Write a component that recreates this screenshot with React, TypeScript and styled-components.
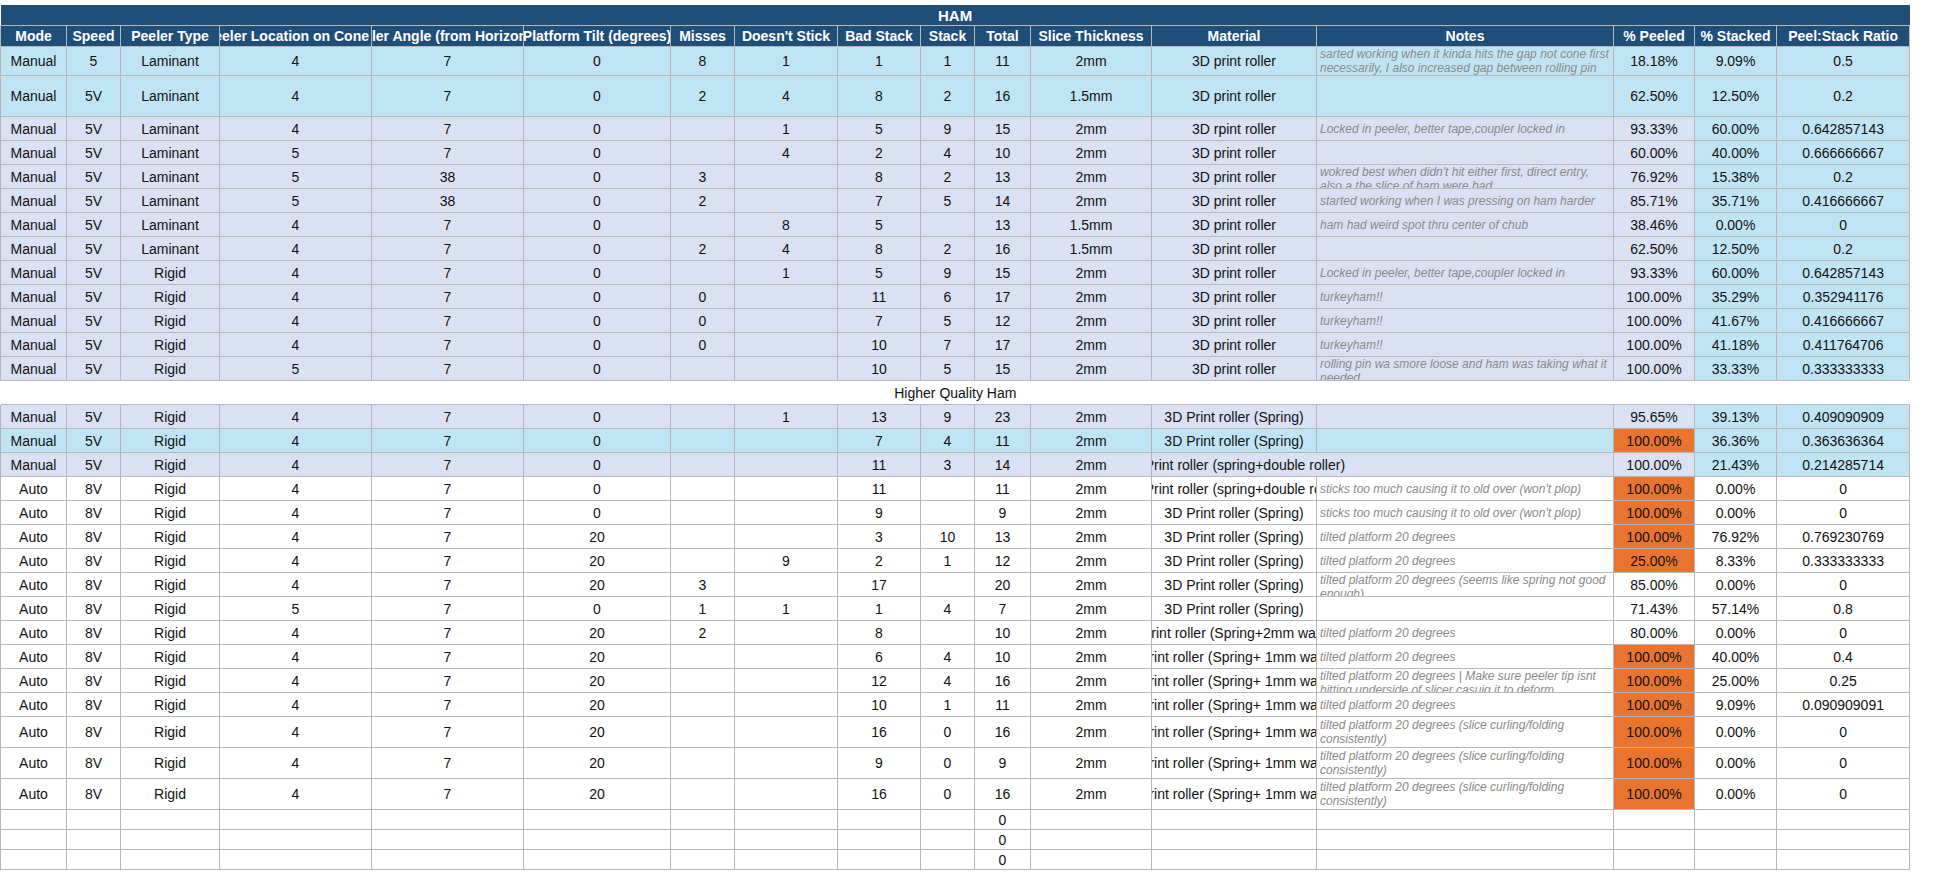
import React from "react";
import styled, { createGlobalStyle, css } from "styled-components";

const Global = createGlobalStyle`
  html, body { margin: 0; padding: 0; background: #fff; }
  body { font-family: "Liberation Sans", Arial, sans-serif; }
`;

const COLS = [66, 54, 99, 152, 152, 147, 64, 103, 83, 54, 56, 121, 165, 297, 81, 82, 133];
const NOTES_W = 297;

const Page = styled.div`
  padding-top: 5px;
`;

const Table = styled.table`
  border-collapse: collapse;
  table-layout: fixed;
  width: ${COLS.reduce((a, b) => a + b, 0)}px;
  font-size: 14px;
  color: #111;
`;

const TitleCell = styled.th`
  background: #1f4e79;
  color: #fff;
  font-weight: bold;
  font-size: 15px;
  height: 20px;
  padding: 0;
  text-align: center;
  border-bottom: 1px solid #b7b7b7;
`;

const HeadCell = styled.th`
  background: #1f4e79;
  color: #fff;
  font-weight: bold;
  font-size: 14px;
  height: 20px;
  padding: 0;
  border: 1px solid #b7b7b7;
  border-top: none;
`;

type Tone = "cyan" | "lav" | "white" | "orange";
const toneColor: Record<Tone, string> = {
  cyan: "#bfe5f4",
  lav: "#d9e1f2",
  white: "#ffffff",
  orange: "#e9742f",
};

const Td = styled.td<{ $tone: Tone }>`
  background: ${(p) => toneColor[p.$tone]};
  border: 1px solid #b7b7b7;
  padding: 0;
  vertical-align: middle;
`;

const Clip = styled.div<{ $h: number; $extra?: number }>`
  height: ${(p) => p.$h}px;
  display: flex;
  align-items: center;
  justify-content: center;
  overflow: hidden;
  white-space: nowrap;
  ${(p) =>
    p.$extra
      ? css`
          padding-right: ${p.$extra}px;
        `
      : ""}
`;

const Note = styled.div<{ $h: number }>`
  height: ${(p) => p.$h}px;
  display: flex;
  align-items: safe center;
  overflow: hidden;
  padding: 0 3px;
  font-style: italic;
  font-size: 12px;
  line-height: 14px;
  color: #8a8a8a;
`;

const SectionCell = styled.td`
  height: 23px;
  padding: 0;
  text-align: center;
  font-size: 14px;
  background: #fff;
  border-left: 1px solid #fff;
`;

const HEADERS = [
  "Mode", "Speed", "Peeler Type", "Peeler Location on Cone (o", "Peeler Angle (from Horizontal)",
  "Platform Tilt (degrees)", "Misses", "Doesn't Stick", "Bad Stack", "Stack", "Total",
  "Slice Thickness", "Material", "Notes", "% Peeled", "% Stacked", "Peel:Stack Ratio",
];

type R = {
  c: (string | number)[];
  tone: Tone;
  h?: number;
  orange?: boolean;
  spill?: boolean;
};

const N1 = "sarted working when it kinda hits the gap not cone first necessarily, I also increased gap between rolling pin and cone";
const LOCK = "Locked in peeler, better tape,coupler locked in";
const TILT = "tilted platform 20 degrees";
const CURL = "tilted platform 20 degrees (slice curling/folding consistently)";
const STICK = "sticks too much causing it to old over (won't plop)";
const SP = "3D Print roller (Spring)";
const DBL = "3D Print roller (spring+double roller)";
const W1 = "3D Print roller (Spring+ 1mm washer)";

const m = (a: (string | number)[], tone: Tone, extra: Partial<R> = {}): R => ({ c: a, tone, ...extra });

const sec1: R[] = [
  m(["Manual", 5, "Laminant", 4, 7, 0, 8, 1, 1, 1, 11, "2mm", "3D print roller", N1, "18.18%", "9.09%", 0.5], "cyan", { h: 28 }),
  m(["Manual", "5V", "Laminant", 4, 7, 0, 2, 4, 8, 2, 16, "1.5mm", "3D print roller", "", "62.50%", "12.50%", 0.2], "cyan", { h: 40 }),
  m(["Manual", "5V", "Laminant", 4, 7, 0, "", 1, 5, 9, 15, "2mm", "3D rpint roller", LOCK, "93.33%", "60.00%", "0.642857143"], "lav"),
  m(["Manual", "5V", "Laminant", 5, 7, 0, "", 4, 2, 4, 10, "2mm", "3D print roller", "", "60.00%", "40.00%", "0.666666667"], "lav"),
  m(["Manual", "5V", "Laminant", 5, 38, 0, 3, "", 8, 2, 13, "2mm", "3D print roller", "wokred best when didn't hit either first, direct entry, also a the slice of ham were bad", "76.92%", "15.38%", 0.2], "lav"),
  m(["Manual", "5V", "Laminant", 5, 38, 0, 2, "", 7, 5, 14, "2mm", "3D print roller", "started working when I was pressing on ham harder", "85.71%", "35.71%", "0.416666667"], "lav"),
  m(["Manual", "5V", "Laminant", 4, 7, 0, "", 8, 5, "", 13, "1.5mm", "3D print roller", "ham had weird spot thru center of chub", "38.46%", "0.00%", 0], "lav"),
  m(["Manual", "5V", "Laminant", 4, 7, 0, 2, 4, 8, 2, 16, "1.5mm", "3D print roller", "", "62.50%", "12.50%", 0.2], "lav"),
  m(["Manual", "5V", "Rigid", 4, 7, 0, "", 1, 5, 9, 15, "2mm", "3D print roller", LOCK, "93.33%", "60.00%", "0.642857143"], "lav"),
  m(["Manual", "5V", "Rigid", 4, 7, 0, 0, "", 11, 6, 17, "2mm", "3D print roller", "turkeyham!!", "100.00%", "35.29%", "0.352941176"], "lav"),
  m(["Manual", "5V", "Rigid", 4, 7, 0, 0, "", 7, 5, 12, "2mm", "3D print roller", "turkeyham!!", "100.00%", "41.67%", "0.416666667"], "lav"),
  m(["Manual", "5V", "Rigid", 4, 7, 0, 0, "", 10, 7, 17, "2mm", "3D print roller", "turkeyham!!", "100.00%", "41.18%", "0.411764706"], "lav"),
  m(["Manual", "5V", "Rigid", 5, 7, 0, "", "", 10, 5, 15, "2mm", "3D print roller", "rolling pin wa smore loose and ham was taking what it needed", "100.00%", "33.33%", "0.333333333"], "lav"),
];

const sec2: R[] = [
  m(["Manual", "5V", "Rigid", 4, 7, 0, "", 1, 13, 9, 23, "2mm", SP, "", "95.65%", "39.13%", "0.409090909"], "lav"),
  m(["Manual", "5V", "Rigid", 4, 7, 0, "", "", 7, 4, 11, "2mm", SP, "", "100.00%", "36.36%", "0.363636364"], "cyan", { orange: true }),
  m(["Manual", "5V", "Rigid", 4, 7, 0, "", "", 11, 3, 14, "2mm", DBL, "", "100.00%", "21.43%", "0.214285714"], "lav", { spill: true }),
  m(["Auto", "8V", "Rigid", 4, 7, 0, "", "", 11, "", 11, "2mm", DBL, STICK, "100.00%", "0.00%", 0], "white", { orange: true }),
  m(["Auto", "8V", "Rigid", 4, 7, 0, "", "", 9, "", 9, "2mm", SP, STICK, "100.00%", "0.00%", 0], "white", { orange: true }),
  m(["Auto", "8V", "Rigid", 4, 7, 20, "", "", 3, 10, 13, "2mm", SP, TILT, "100.00%", "76.92%", "0.769230769"], "white", { orange: true }),
  m(["Auto", "8V", "Rigid", 4, 7, 20, "", 9, 2, 1, 12, "2mm", SP, TILT, "25.00%", "8.33%", "0.333333333"], "white", { orange: true }),
  m(["Auto", "8V", "Rigid", 4, 7, 20, 3, "", 17, "", 20, "2mm", SP, "tilted platform 20 degrees (seems like spring not good enough)", "85.00%", "0.00%", 0], "white"),
  m(["Auto", "8V", "Rigid", 5, 7, 0, 1, 1, 1, 4, 7, "2mm", SP, "", "71.43%", "57.14%", 0.8], "white"),
  m(["Auto", "8V", "Rigid", 4, 7, 20, 2, "", 8, "", 10, "2mm", "3D Print roller (Spring+2mm washer)", TILT, "80.00%", "0.00%", 0], "white"),
  m(["Auto", "8V", "Rigid", 4, 7, 20, "", "", 6, 4, 10, "2mm", W1, TILT, "100.00%", "40.00%", 0.4], "white", { orange: true }),
  m(["Auto", "8V", "Rigid", 4, 7, 20, "", "", 12, 4, 16, "2mm", W1, "tilted platform 20 degrees | Make sure peeler tip isnt hitting underside of slicer casuig it to deform", "100.00%", "25.00%", 0.25], "white", { orange: true }),
  m(["Auto", "8V", "Rigid", 4, 7, 20, "", "", 10, 1, 11, "2mm", W1, TILT, "100.00%", "9.09%", "0.090909091"], "white", { orange: true }),
  m(["Auto", "8V", "Rigid", 4, 7, 20, "", "", 16, 0, 16, "2mm", W1, CURL, "100.00%", "0.00%", 0], "white", { orange: true, h: 30 }),
  m(["Auto", "8V", "Rigid", 4, 7, 20, "", "", 9, 0, 9, "2mm", W1, CURL, "100.00%", "0.00%", 0], "white", { orange: true, h: 30 }),
  m(["Auto", "8V", "Rigid", 4, 7, 20, "", "", 16, 0, 16, "2mm", W1, CURL, "100.00%", "0.00%", 0], "white", { orange: true, h: 30 }),
  ...[0, 1, 2].map(() => m(["", "", "", "", "", "", "", "", "", "", 0, "", "", "", "", "", ""], "white", { h: 19 })),
];

function DataRow({ r }: { r: R }) {
  const h = r.h ?? 23;
  const cells: React.ReactNode[] = [];
  r.c.forEach((v, i) => {
    if (r.spill && i === 13) return;
    let tone: Tone = r.tone;
    if ((i === 15 || i === 16) && r.tone !== "white") tone = "cyan";
    if (i === 14 && r.orange) tone = "orange";
    if (i === 13) {
      cells.push(
        <Td key={i} $tone={tone}>
          <Note $h={h}>{v}</Note>
        </Td>
      );
    } else if (i === 12 && r.spill) {
      cells.push(
        <Td key={i} $tone={tone} colSpan={2}>
          <Clip $h={h} $extra={NOTES_W}>{v}</Clip>
        </Td>
      );
    } else {
      cells.push(
        <Td key={i} $tone={tone}>
          <Clip $h={h}>{v}</Clip>
        </Td>
      );
    }
  });
  return <tr>{cells}</tr>;
}

export default function App() {
  return (
    <Page>
      <Global />
      <Table>
        <colgroup>
          {COLS.map((w, i) => (
            <col key={i} style={{ width: w }} />
          ))}
        </colgroup>
        <thead>
          <tr>
            <TitleCell colSpan={17}>HAM</TitleCell>
          </tr>
          <tr>
            {HEADERS.map((t, i) => (
              <HeadCell key={i}>
                <Clip $h={20}>{t}</Clip>
              </HeadCell>
            ))}
          </tr>
        </thead>
        <tbody>
          {sec1.map((r, i) => (
            <DataRow key={"a" + i} r={r} />
          ))}
          <tr>
            <SectionCell colSpan={17}>Higher Quality Ham</SectionCell>
          </tr>
          {sec2.map((r, i) => (
            <DataRow key={"b" + i} r={r} />
          ))}
        </tbody>
      </Table>
    </Page>
  );
}
